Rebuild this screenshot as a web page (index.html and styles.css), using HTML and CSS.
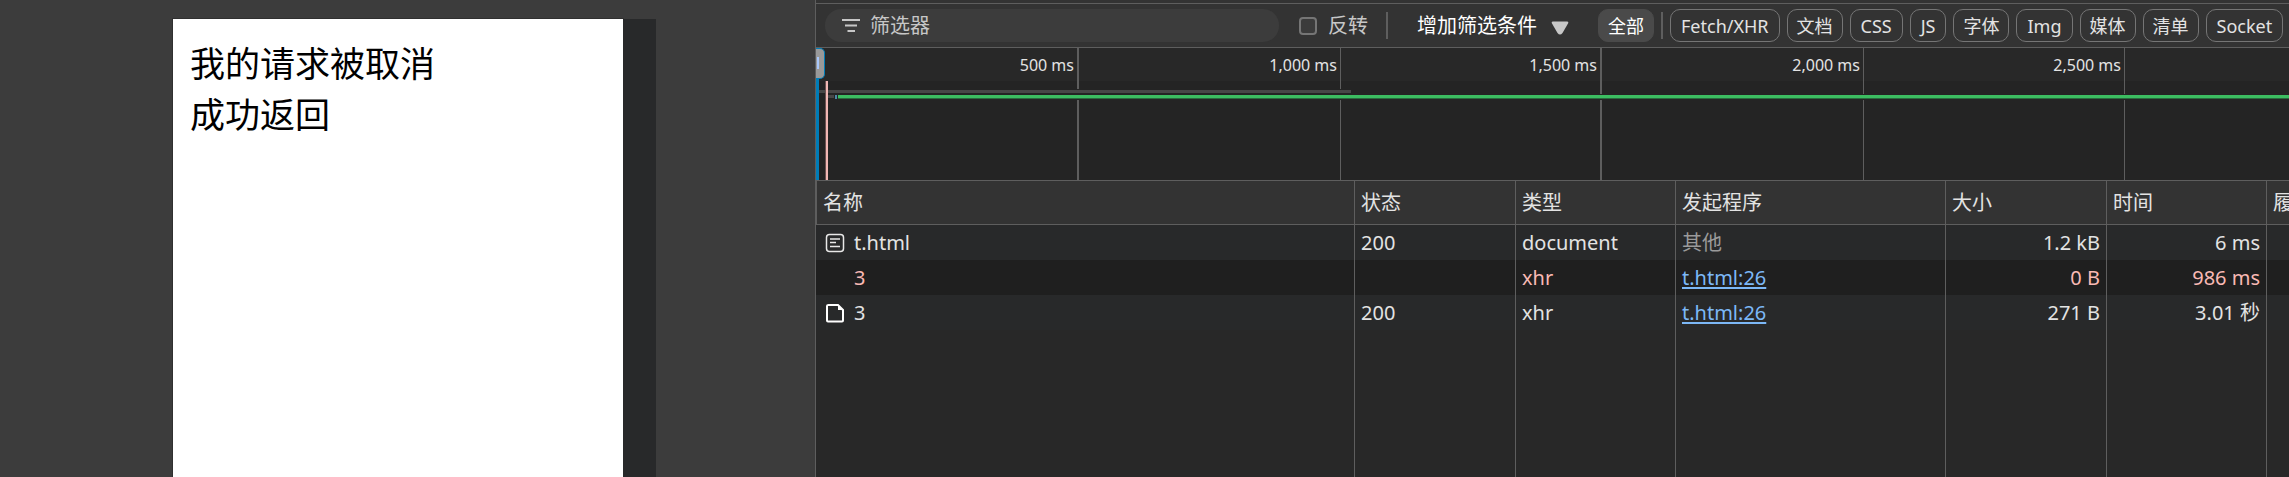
FILE: index.html
```html
<!DOCTYPE html>
<html lang="zh-CN">
<head>
<meta charset="utf-8">
<title>网络</title>
<link rel="stylesheet" href="styles.css">
</head>
<body>
<main class="workspace">
  <section class="viewport">
    <div class="device">
      <p>我的请求被取消</p>
      <p>成功返回</p>
    </div>
    <div class="device-handle"></div>
  </section>
  <section class="devtools">
    <div class="toolbar">
      <label class="search">
        <svg class="search-icon" viewBox="0 0 20 20" aria-hidden="true"><path d="M1 4h18M4 9.500h12M6.500 15h7.500"/></svg>
        <input type="text" placeholder="筛选器" aria-label="筛选器">
      </label>
      <label class="invert"><input type="checkbox">反转</label>
      <span class="divider"></span>
      <button class="more">增加筛选条件
        <svg class="caret" viewBox="0 0 18 14" aria-hidden="true"><path d="M2 0.500h14q2 0 1 2L11.500 12q-2.500 3-5 0L1 2.500q-1-2 1-2z"/></svg>
      </button>
      <div class="types">
        <button class="pill active">全部</button>
        <span class="divider"></span>
        <button class="pill latin">Fetch/XHR</button>
        <button class="pill">文档</button>
        <button class="pill latin">CSS</button>
        <button class="pill latin">JS</button>
        <button class="pill">字体</button>
        <button class="pill latin">Img</button>
        <button class="pill">媒体</button>
        <button class="pill">清单</button>
        <button class="pill latin">Socket</button>
        <button class="pill" aria-label="Wasm"></button>
      </div>
    </div>
    <div class="timeline">
      <div class="tick thick">500 ms</div>
      <div class="tick">1,000 ms</div>
      <div class="tick thick">1,500 ms</div>
      <div class="tick">2,000 ms</div>
      <div class="tick">2,500 ms</div>
      <div class="track track-cancelled"></div>
      <div class="track track-queue"></div>
      <div class="track track-start"></div>
      <div class="track track-waiting"></div>
      <div class="load-marker"></div>
      <div class="range-edge"></div>
      <div class="range-grip"></div>
    </div>
    <table class="requests">
      <colgroup><col class="c-name"><col class="c-status"><col class="c-type"><col class="c-initiator"><col class="c-size"><col class="c-time"><col></colgroup>
      <thead>
        <tr><th>名称</th><th>状态</th><th>类型</th><th>发起程序</th><th>大小</th><th>时间</th><th>履</th></tr>
      </thead>
      <tbody>
        <tr>
          <td><span class="name"><svg class="file-icon" viewBox="0 0 20 20" aria-hidden="true"><rect x="1.500" y="1.500" width="17" height="17" rx="3"/><path d="M5 6h10M5 9.500h6M5 13.500h10"/></svg>t.html</span></td>
          <td>200</td><td>document</td><td class="muted">其他</td><td class="num">1.2 kB</td><td class="num">6 ms</td><td></td>
        </tr>
        <tr class="failed">
          <td><span class="name"><span class="file-icon"></span>3</span></td>
          <td></td><td>xhr</td><td><a href="#">t.html:26</a></td><td class="num">0 B</td><td class="num">986 ms</td><td></td>
        </tr>
        <tr>
          <td><span class="name"><svg class="file-icon bold" viewBox="0 0 20 20" aria-hidden="true"><path d="M3.500 2H13l5 5v10.500q0 1-1 1H3q-1 0-1-1V3q0-1 1.500-1z"/><path class="fold" d="M13 2v5h5z"/></svg>3</span></td>
          <td>200</td><td>xhr</td><td><a href="#">t.html:26</a></td><td class="num">271 B</td><td class="num">3.01 秒</td><td></td>
        </tr>
        <tr class="filler"><td></td><td></td><td></td><td></td><td></td><td></td><td></td></tr>
      </tbody>
    </table>
  </section>
</main>
</body>
</html>
```
FILE: styles.css
```css
* { box-sizing: border-box; }

body {
  margin: 0;
  background: #3c3c3c;
  color: #e3e3e3;
  font: 20px/24px "Noto Sans", "Noto Sans CJK SC", sans-serif;
}

button, input { font: inherit; color: inherit; }

.workspace {
  display: grid;
  grid-template-columns: 815fr 1474fr;
  height: 100vh;
  overflow: hidden;
}

/* Emulated page */
.viewport {
  display: flex;
  justify-content: center;
  padding-top: 19px;
  padding-left: 14px;
}
.device {
  width: 450px;
  padding: 19px 17px;
  background: #fff;
  color: #000;
  box-shadow: 0 0 0 1px #303030;
  font-size: 35px;
  line-height: 51px;
}
.device p { margin: 0; }
.device-handle { width: 33px; background: #28292a; z-index: 1; }

/* Panel */
.devtools {
  display: flex;
  flex-direction: column;
  min-width: 0;
  padding-top: 3px;
  overflow: hidden;
  background: #333;
  border-left: 1px solid #5e5e5e;
}

.toolbar {
  display: flex;
  align-items: center;
  flex: none;
  height: 45px;
  padding-left: 9px;
  border-top: 1px solid #5e5e5e;
  border-bottom: 1px solid #5e5e5e;
  white-space: nowrap;
}
.search {
  display: flex;
  align-items: center;
  gap: 9px;
  flex: none;
  width: 454px;
  height: 33px;
  padding: 0 16px;
  border-radius: 16px;
  background: #3c3c3c;
}
.search-icon { width: 20px; height: 20px; fill: none; stroke: #c7c7c7; stroke-width: 2; }
.search input {
  flex: 1;
  min-width: 0;
  padding: 0;
  border: 0;
  outline: 0;
  background: none;
}
.search input::placeholder { color: #c7c7c7; opacity: 1; }
.invert { display: flex; align-items: center; gap: 11px; margin-left: 20px; color: #c7c7c7; }
.invert input {
  appearance: none;
  width: 18px;
  height: 18px;
  margin: 0;
  border: 2px solid #757575;
  border-radius: 4px;
  background: #3b3b3b;
}
.divider { flex: none; width: 2px; height: 27px; background: #5e5e5e; }
.invert + .divider { margin-left: 18px; }
.more {
  display: flex;
  align-items: center;
  gap: 14px;
  margin-left: 29px;
  padding: 0;
  border: 0;
  background: none;
  color: #fff;
}
.caret { width: 18px; height: 14px; margin-top: 5px; fill: #c7c7c7; }
.types { display: flex; align-items: center; gap: 7px; margin-left: 29px; }
.pill {
  flex: none;
  height: 33px;
  padding: 0 9px;
  border: 1px solid #757575;
  border-radius: 10px;
  background: none;
  font-size: 18px;
  line-height: 24px;
}
.pill.latin { padding: 0 10px; }
.pill.active { border-color: #4a4a4a; background: #4a4a4a; color: #fff; }

/* Overview */
.timeline {
  position: relative;
  display: grid;
  grid-template-columns: 263px 262px 261px 262px 261px;
  flex: none;
  height: 133px;
  overflow: hidden;
  border-bottom: 1px solid #5e5e5e;
  background: linear-gradient(#282828 33px, #242424 33px);
}
.tick {
  padding: 5px 3px 0 0;
  border-right: 1px solid #5e5e5e;
  font-size: 16px;
  text-align: right;
}
.tick.thick { border-right-width: 2px; }
.track { position: absolute; height: 3px; }
.track-cancelled { top: 42px; left: 3px; width: 532px; background: #474747; box-shadow: 0 0 0 1px #242424; }
.track-queue { top: 47px; left: 12px; width: 6px; background: #474747; }
.track-start { top: 47px; left: 19px; width: 2px; height: 4px; background: #4c8aa8; }
.track-waiting {
  top: 47px;
  left: 22px;
  right: 0;
  height: 4px;
  border-bottom: 1px solid #286b3e;
  background: #3cbd61;
  box-shadow: 0 0 0 1px #242424;
}
.load-marker { position: absolute; top: 33px; bottom: 0; left: 9px; width: 3px; background: #f2b8b5; border-left: 1px solid #6b5252; }
.range-edge { position: absolute; top: 0; bottom: 0; left: 0; width: 3px; background: #007db8; }
.range-grip {
  position: absolute;
  top: 0;
  left: 0;
  width: 9px;
  height: 31px;
  border: 1px solid #007db8;
  border-left: 0;
  border-radius: 0 5px 5px 0;
  background: linear-gradient(#a8c7fa, #a8c7fa) 1px 8px / 2px 12px no-repeat, #999;
}

/* Requests */
.requests {
  flex: 1;
  width: 100%;
  table-layout: fixed;
  border-spacing: 0;
  background: #282828;
}
.c-name { width: 539px; }
.c-status, .c-size { width: 161px; }
.c-type, .c-time { width: 160px; }
.c-initiator { width: 270px; }
.requests th, .requests td {
  padding: 1px 6px 0;
  overflow: hidden;
  border-right: 1px solid #5e5e5e;
  font-weight: 400;
  text-align: left;
  white-space: nowrap;
}
.requests th:last-child, .requests td:last-child { border-right: 0; }
.requests th { height: 44px; border-bottom: 1px solid #5e5e5e; background: #333; }
.requests th:first-child { border-left: 1px solid #5e5e5e; }
.requests td { height: 35px; background: #28292a; }
.requests .failed td { background: #1f1f1f; color: #f9b9b4; }
.requests .filler td { height: auto; background: #282828; }
.requests td.num { text-align: right; }
.requests td.muted { color: #9a9a9a; }
.requests a { color: #7cb8f7; text-underline-offset: 2px; }
.requests td:first-child { padding-left: 9px; }
.name { display: flex; align-items: center; gap: 9px; }
.file-icon { width: 20px; height: 20px; fill: none; stroke: #e8e8e8; stroke-width: 1.5; }
.file-icon.bold { stroke: #fff; stroke-width: 2; }
.file-icon .fold { fill: #fff; stroke: none; }
```
